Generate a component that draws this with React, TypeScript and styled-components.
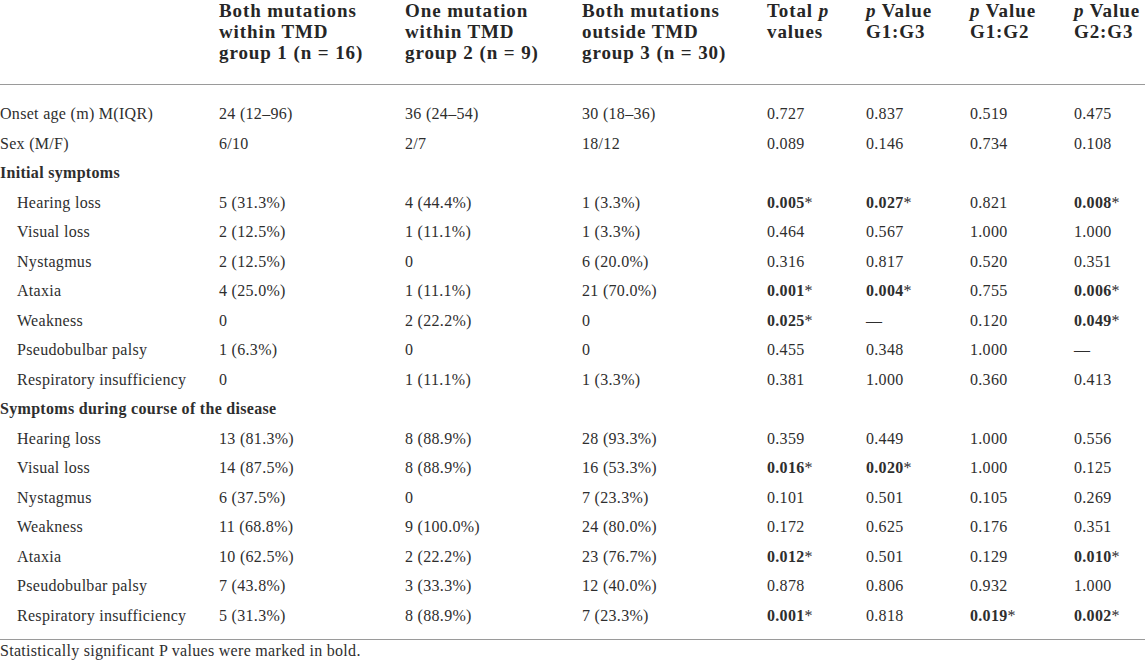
import styled, { createGlobalStyle } from "styled-components"
import { Fragment } from "react"

const GlobalStyle = createGlobalStyle`
  html, body {
    margin: 0;
    padding: 0;
    background: #ffffff;
  }
  body {
    font-family: "Liberation Serif", "Times New Roman", serif;
    color: #2e2e2e;
  }
`

const Page = styled.div`
  width: 1145px;
  display: flex;
  flex-direction: column;
`

const Table = styled.table`
  width: 1145px;
  table-layout: fixed;
  border-collapse: collapse;
  border-bottom: 1px solid #9a9a9a;
`

const HeadCell = styled.th`
  text-align: left;
  vertical-align: top;
  padding: 0 0 21px 0;
  font-size: 19px;
  line-height: 21px;
  font-weight: bold;
  letter-spacing: 0.9px;
  color: #262626;
  border-bottom: 1px solid #9a9a9a;
`

const Row = styled.tr<{ $first?: boolean; $last?: boolean }>`
  & > td {
    padding-top: ${(p) => (p.$first ? "14px" : "0")};
    padding-bottom: ${(p) => (p.$last ? "9px" : "0")};
  }
`

const Cell = styled.td<{ $indent?: boolean; $section?: boolean }>`
  padding: 0 0 0 ${(p) => (p.$indent ? "17px" : "0")};
  height: 29.5px;
  font-size: 16px;
  line-height: 29.5px;
  letter-spacing: 0.3px;
  white-space: nowrap;
  font-weight: ${(p) => (p.$section ? "bold" : "normal")};
`

const Strong = styled.b`
  font-weight: bold;
`

const Note = styled.div`
  font-size: 16px;
  line-height: 20px;
  letter-spacing: 0.3px;
  padding-top: 1px;
`

const cols = [219, 186, 177, 185, 99, 104, 104, 71]

type Row = { label: string; indent?: boolean; section?: boolean; cells?: string[] }

const rows: Row[] = [
  { label: "Onset age (m) M(IQR)", cells: ["24 (12–96)", "36 (24–54)", "30 (18–36)", "0.727", "0.837", "0.519", "0.475"] },
  { label: "Sex (M/F)", cells: ["6/10", "2/7", "18/12", "0.089", "0.146", "0.734", "0.108"] },
  { label: "Initial symptoms", section: true },
  { label: "Hearing loss", indent: true, cells: ["5 (31.3%)", "4 (44.4%)", "1 (3.3%)", "0.005*", "0.027*", "0.821", "0.008*"] },
  { label: "Visual loss", indent: true, cells: ["2 (12.5%)", "1 (11.1%)", "1 (3.3%)", "0.464", "0.567", "1.000", "1.000"] },
  { label: "Nystagmus", indent: true, cells: ["2 (12.5%)", "0", "6 (20.0%)", "0.316", "0.817", "0.520", "0.351"] },
  { label: "Ataxia", indent: true, cells: ["4 (25.0%)", "1 (11.1%)", "21 (70.0%)", "0.001*", "0.004*", "0.755", "0.006*"] },
  { label: "Weakness", indent: true, cells: ["0", "2 (22.2%)", "0", "0.025*", "—", "0.120", "0.049*"] },
  { label: "Pseudobulbar palsy", indent: true, cells: ["1 (6.3%)", "0", "0", "0.455", "0.348", "1.000", "—"] },
  { label: "Respiratory insufficiency", indent: true, cells: ["0", "1 (11.1%)", "1 (3.3%)", "0.381", "1.000", "0.360", "0.413"] },
  { label: "Symptoms during course of the disease", section: true },
  { label: "Hearing loss", indent: true, cells: ["13 (81.3%)", "8 (88.9%)", "28 (93.3%)", "0.359", "0.449", "1.000", "0.556"] },
  { label: "Visual loss", indent: true, cells: ["14 (87.5%)", "8 (88.9%)", "16 (53.3%)", "0.016*", "0.020*", "1.000", "0.125"] },
  { label: "Nystagmus", indent: true, cells: ["6 (37.5%)", "0", "7 (23.3%)", "0.101", "0.501", "0.105", "0.269"] },
  { label: "Weakness", indent: true, cells: ["11 (68.8%)", "9 (100.0%)", "24 (80.0%)", "0.172", "0.625", "0.176", "0.351"] },
  { label: "Ataxia", indent: true, cells: ["10 (62.5%)", "2 (22.2%)", "23 (76.7%)", "0.012*", "0.501", "0.129", "0.010*"] },
  { label: "Pseudobulbar palsy", indent: true, cells: ["7 (43.8%)", "3 (33.3%)", "12 (40.0%)", "0.878", "0.806", "0.932", "1.000"] },
  { label: "Respiratory insufficiency", indent: true, cells: ["5 (31.3%)", "8 (88.9%)", "7 (23.3%)", "0.001*", "0.818", "0.019*", "0.002*"] },
]

// significant values come in as "0.005*": number bold, star plain
function Value({ text }: { text: string }) {
  if (text.endsWith("*")) {
    return <><Strong>{text.slice(0, -1)}</Strong>*</>
  }
  return <>{text}</>
}

const heads: string[][] = [
  [],
  ["Both mutations", "within TMD", "group 1 (n = 16)"],
  ["One mutation", "within TMD", "group 2 (n = 9)"],
  ["Both mutations", "outside TMD", "group 3 (n = 30)"],
]

export default function App() {
  return (
    <Page>
      <GlobalStyle />
      <Table>
        <colgroup>
          {cols.map((w, i) => <col key={i} style={{ width: w }} />)}
        </colgroup>
        <thead>
          <tr>
            {heads.map((lines, i) => (
              <HeadCell key={i}>
                {lines.map((l, j) => <Fragment key={j}>{l}{j < lines.length - 1 && <br />}</Fragment>)}
              </HeadCell>
            ))}
            <HeadCell>Total <i>p</i><br />values</HeadCell>
            <HeadCell><i>p</i> Value<br />G1:G3</HeadCell>
            <HeadCell><i>p</i> Value<br />G1:G2</HeadCell>
            <HeadCell><i>p</i> Value<br />G2:G3</HeadCell>
          </tr>
        </thead>
        <tbody>
          {rows.map((r, i) => (
            <Row key={i} $first={i === 0} $last={i === rows.length - 1}>
              <Cell $indent={r.indent} $section={r.section}>{r.label}</Cell>
              {(r.cells ?? ["", "", "", "", "", "", ""]).map((c, j) => (
                <Cell key={j}><Value text={c} /></Cell>
              ))}
            </Row>
          ))}
        </tbody>
      </Table>
      <Note>Statistically significant P values were marked in bold.</Note>
    </Page>
  )
}
